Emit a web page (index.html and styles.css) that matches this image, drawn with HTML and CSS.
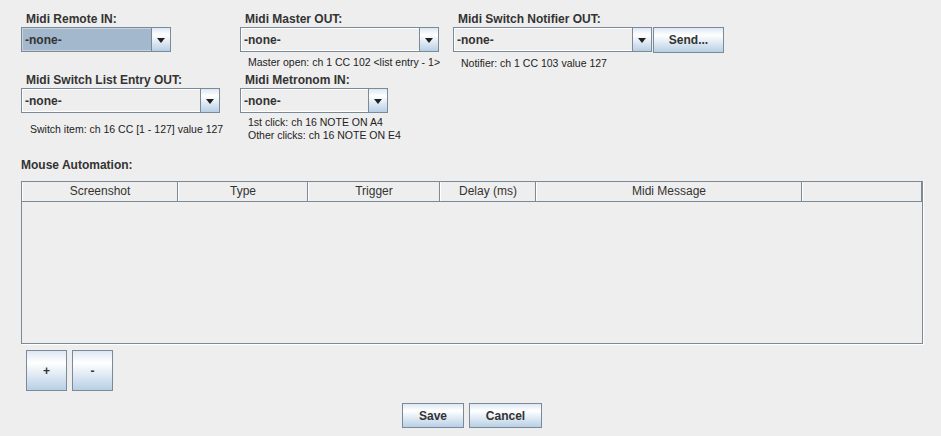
FILE: index.html
```html
<!DOCTYPE html>
<html>
<head>
<meta charset="utf-8">
<link rel="stylesheet" href="styles.css">
</head>
<body>
<div class="app">
  <div class="midi-grid">
    <div class="cell c1">
      <div class="label">Midi Remote IN:</div>
      <div class="combo w150 selected"><div class="combo-text">-none-</div><div class="combo-arrow"><span class="tri"></span></div></div>
    </div>
    <div class="cell c2">
      <div class="label">Midi Master OUT:</div>
      <div class="combo w199"><div class="combo-text">-none-</div><div class="combo-arrow"><span class="tri"></span></div></div>
      <div class="info info-top">Master open: ch 1 CC 102 &lt;list entry - 1&gt;</div>
    </div>
    <div class="cell c3">
      <div class="label">Midi Switch Notifier OUT:</div>
      <div class="combo-row">
        <div class="combo w199"><div class="combo-text">-none-</div><div class="combo-arrow"><span class="tri"></span></div></div>
        <button class="btn send">Send...</button>
      </div>
      <div class="info info-top">Notifier: ch 1 CC 103 value 127</div>
    </div>
    <div class="cell c1">
      <div class="label">Midi Switch List Entry OUT:</div>
      <div class="combo w199"><div class="combo-text">-none-</div><div class="combo-arrow"><span class="tri"></span></div></div>
      <div class="info info-switch">Switch item: ch 16 CC [1 - 127] value 127</div>
    </div>
    <div class="cell c2">
      <div class="label">Midi Metronom IN:</div>
      <div class="combo w148"><div class="combo-text">-none-</div><div class="combo-arrow"><span class="tri"></span></div></div>
      <div class="info info-metro">1st click: ch 16 NOTE ON A4<br>Other clicks: ch 16 NOTE ON E4</div>
    </div>
    <div class="cell c3"></div>
  </div>

  <div class="section-label">Mouse Automation:</div>

  <div class="table">
    <div class="thead">
      <div class="th col1">Screenshot</div>
      <div class="th col2">Type</div>
      <div class="th col3">Trigger</div>
      <div class="th col4">Delay (ms)</div>
      <div class="th col5">Midi Message</div>
      <div class="th col6"></div>
    </div>
    <div class="tbody"></div>
  </div>

  <div class="row-buttons">
    <button class="btn square">+</button>
    <button class="btn square">-</button>
  </div>

  <div class="footer">
    <button class="btn save">Save</button>
    <button class="btn cancel">Cancel</button>
  </div>
</div>
</body>
</html>
```

FILE: styles.css
```css
* { box-sizing: border-box; }
html, body {
  margin: 0;
  padding: 0;
  background: #eeeeee;
}
body {
  font-family: "Liberation Sans", Arial, sans-serif;
  font-size: 12px;
  color: #333333;
  width: 941px;
  height: 436px;
  overflow: hidden;
}
.app {
  padding-top: 12px;
}
.midi-grid {
  display: grid;
  grid-template-columns: 219px 213px 300px;
  grid-template-rows: 61px 83px;
  padding-left: 21px;
}
.cell {
  display: flex;
  flex-direction: column;
  align-items: flex-start;
}
.label {
  font-weight: bold;
  line-height: 15px;
  height: 15px;
  padding-left: 5px;
  white-space: nowrap;
}
.combo-row {
  display: flex;
  gap: 1px;
}
.combo {
  display: flex;
  height: 25px;
  border: 1px solid #7a8a99;
  background: #eeeeee;
}
.w150 { width: 150px; }
.w199 { width: 199px; }
.w148 { width: 148px; }
.combo-text {
  flex: 1;
  font-weight: bold;
  line-height: 22px;
  padding-left: 2px;
  border: 1px solid #ffffff;
  border-right: none;
  white-space: nowrap;
}
.combo.selected .combo-text {
  background: #a3b8cc;
  border-color: #c6d3df;
}
.combo-arrow {
  width: 19px;
  border-left: 1px solid #7a8a99;
  background: linear-gradient(#dde8f3 0%, #ffffff 30%, #b8cfe5 100%);
  display: flex;
  align-items: center;
  justify-content: center;
}
.tri {
  width: 0;
  height: 0;
  border-left: 4.5px solid transparent;
  border-right: 4.5px solid transparent;
  border-top: 5px solid #222222;
  margin-top: 1px;
}
.info {
  font-size: 10.5px;
  line-height: 13px;
  white-space: nowrap;
  color: #222222;
}
.info-top {
  margin-top: 4px;
  padding-left: 8px;
}
.info-switch {
  margin-top: 10px;
  padding-left: 9px;
}
.info-metro {
  margin-top: 3px;
  padding-left: 8px;
}
.btn {
  font-family: "Liberation Sans", Arial, sans-serif;
  font-weight: bold;
  font-size: 12px;
  color: #333333;
  border: 1px solid #7a8a99;
  background: linear-gradient(#dde8f3 0%, #ffffff 30%, #b8cfe5 100%);
  padding: 0;
  margin: 0;
  border-radius: 0;
}
.send {
  width: 71px;
  height: 26px;
}
.section-label {
  font-weight: bold;
  line-height: 15px;
  padding-left: 21px;
  height: 15px;
  margin-top: 2px;
}
.table {
  margin-top: 8px;
  margin-left: 21px;
  width: 902px;
  height: 163px;
  border: 1px solid #7a8a99;
  box-shadow: 1px 1px 0 #ffffff;
  display: flex;
  flex-direction: column;
}
.thead {
  display: flex;
  height: 20px;
  border-bottom: 1px solid #7a8a99;
}
.th {
  height: 19px;
  line-height: 19px;
  text-align: center;
  font-weight: normal;
  border-right: 1px solid #7a8a99;
  border-left: 1px solid #ffffff;
  white-space: nowrap;
}
.col1 { width: 156px; }
.col2 { width: 130px; }
.col3 { width: 132px; }
.col4 { width: 96px; }
.col5 { width: 266px; }
.col6 { flex: 1; }
.tbody {
  flex: 1;
}
.row-buttons {
  display: flex;
  gap: 5px;
  margin-top: 6px;
  padding-left: 26px;
}
.square {
  width: 41px;
  height: 41px;
}
.footer {
  display: flex;
  justify-content: center;
  gap: 5px;
  margin-top: 12px;
  padding-left: 3px;
}
.save {
  width: 62px;
  height: 25px;
}
.cancel {
  width: 73px;
  height: 25px;
}
```
